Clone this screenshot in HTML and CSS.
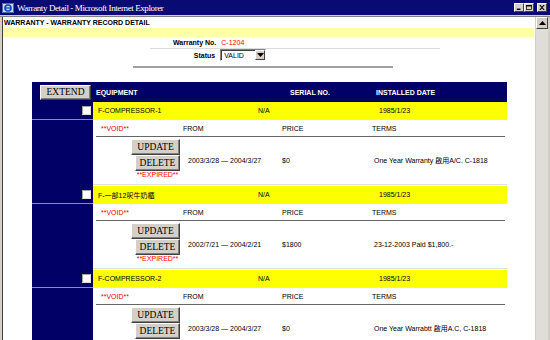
FILE: index.html
```html
<!DOCTYPE html>
<html lang="zh-Hant">
<head>
  <meta charset="UTF-8">
  <title>Warranty Detail</title>
  <link rel="stylesheet" href="styles.css">
</head>
<body>
  <div class="window">
    <div class="title-bar">
      <svg class="app-icon" viewBox="0 0 12 12" width="12" height="12">
        <rect x="0.5" y="1.5" width="11" height="9" fill="#c8d8f0" stroke="#5070a0"/>
        <circle cx="6" cy="6" r="3" fill="none" stroke="#1040c0" stroke-width="1.6"/>
        <line x1="3" y1="6" x2="9" y2="6" stroke="#1040c0" stroke-width="1.2"/>
      </svg>
      <span class="title-text">Warranty Detail - Microsoft Internet Explorer</span>
      <div class="title-buttons">
        <span class="tb-btn">
          <svg viewBox="0 0 8 7" width="8" height="7"><rect x="1" y="5" width="5" height="2" fill="#000"/></svg>
        </span>
        <span class="tb-btn">
          <svg viewBox="0 0 8 7" width="8" height="7"><rect x="0.5" y="0.5" width="7" height="6" fill="none" stroke="#000"/><rect x="0" y="0" width="8" height="2" fill="#000"/></svg>
        </span>
        <span class="tb-btn close">
          <svg viewBox="0 0 8 7" width="8" height="7"><path d="M1 0 L7 7 M7 0 L1 7" stroke="#000" stroke-width="1.6"/></svg>
        </span>
      </div>
    </div>

    <div class="client">
      <div class="page">
        <div class="page-title">WARRANTY - WARRANTY RECORD DETAIL</div>
        <div class="notice-band"></div>

        <div class="record-form">
          <div class="form-row first">
            <span class="form-label">Warranty No.</span>
            <span class="form-value red">C-1204</span>
          </div>
          <div class="form-row">
            <span class="form-label">Status</span>
            <span class="select">
              <span class="select-text">VALID</span>
              <span class="select-btn">
                <svg viewBox="0 0 7 4" width="7" height="4"><path d="M0 0 H7 L3.5 4 Z" fill="#000"/></svg>
              </span>
            </span>
          </div>
        </div>
        <div class="rule"></div>

        <div class="warranty-table">
          <div class="table-head">
            <div class="head-side"><span class="btn extend">EXTEND</span></div>
            <div class="head-cols">
              <span>EQUIPMENT</span>
              <span>SERIAL NO.</span>
              <span>INSTALLED DATE</span>
            </div>
          </div>

          <div class="record">
            <div class="rec-check"><span class="checkbox"></span></div>
            <div class="rec-main">
              <span>F-COMPRESSOR-1</span>
              <span>N/A</span>
              <span>1985/1/23</span>
            </div>
            <div class="rec-side"></div>
            <div class="rec-detail">
              <div class="detail-head">
                <span class="red">**VOID**</span>
                <span>FROM</span>
                <span>PRICE</span>
                <span>TERMS</span>
              </div>
              <div class="detail-body">
                <div class="actions">
                  <span class="btn update">UPDATE</span>
                  <span class="btn delete">DELETE</span>
                  <span class="red expired">**EXPIRED**</span>
                </div>
                <span class="cell dates">2003/3/28 — 2004/3/27</span>
                <span class="cell">$0</span>
                <span class="cell">One Year Warranty 啟用A/C. C-1818</span>
              </div>
            </div>
          </div>

          <div class="record">
            <div class="rec-check"><span class="checkbox"></span></div>
            <div class="rec-main">
              <span>F-一部12呎牛奶櫃</span>
              <span>N/A</span>
              <span>1985/1/23</span>
            </div>
            <div class="rec-side"></div>
            <div class="rec-detail">
              <div class="detail-head">
                <span class="red">**VOID**</span>
                <span>FROM</span>
                <span>PRICE</span>
                <span>TERMS</span>
              </div>
              <div class="detail-body">
                <div class="actions">
                  <span class="btn update">UPDATE</span>
                  <span class="btn delete">DELETE</span>
                  <span class="red expired">**EXPIRED**</span>
                </div>
                <span class="cell dates">2002/7/21 — 2004/2/21</span>
                <span class="cell">$1800</span>
                <span class="cell">23-12-2003 Paid $1,800.-</span>
              </div>
            </div>
          </div>

          <div class="record">
            <div class="rec-check"><span class="checkbox"></span></div>
            <div class="rec-main">
              <span>F-COMPRESSOR-2</span>
              <span>N/A</span>
              <span>1985/1/23</span>
            </div>
            <div class="rec-side"></div>
            <div class="rec-detail">
              <div class="detail-head">
                <span class="red">**VOID**</span>
                <span>FROM</span>
                <span>PRICE</span>
                <span>TERMS</span>
              </div>
              <div class="detail-body">
                <div class="actions">
                  <span class="btn update">UPDATE</span>
                  <span class="btn delete">DELETE</span>
                </div>
                <span class="cell dates">2003/3/28 — 2004/3/27</span>
                <span class="cell">$0</span>
                <span class="cell">One Year Warrabtt 啟用A.C, C-1818</span>
              </div>
            </div>
          </div>
        </div>
      </div>

      <div class="scrollbar">
        <span class="scroll-up">
          <svg viewBox="0 0 7 4" width="7" height="4"><path d="M0 4 H7 L3.5 0 Z" fill="#000"/></svg>
        </span>
      </div>
    </div>
  </div>
</body>
</html>
```

FILE: styles.css
```css
* {
  margin: 0;
  padding: 0;
  box-sizing: border-box;
}

body {
  font-family: "Liberation Sans", Arial, "Noto Sans CJK TC", sans-serif;
  font-size: 7px;
  color: #000;
  background: #d4d0c8;
  overflow: hidden;
}

.window {
  width: 550px;
  height: 340px;
  display: flex;
  flex-direction: column;
  background: #d4d0c8;
}

/* Title bar */
.title-bar {
  height: 15px;
  flex: none;
  display: flex;
  align-items: center;
  padding: 0 3px 0 2px;
  background: #0a0a74;
  color: #fff;
}

.app-icon {
  margin-right: 3px;
}

.title-text {
  flex: 1;
  font-family: "Liberation Serif", serif;
  font-size: 9px;
  letter-spacing: -0.4px;
}

.title-buttons {
  display: flex;
}

.tb-btn {
  width: 10px;
  height: 9px;
  display: flex;
  align-items: center;
  justify-content: center;
  background: #d4d0c8;
  border: 1px solid;
  border-color: #fff #404040 #404040 #fff;
}

.tb-btn svg {
  width: 6px;
  height: 5px;
}

.tb-btn.close {
  margin-left: 3px;
}

/* Client area */
.client {
  flex: 1;
  min-height: 0;
  display: flex;
  margin-top: 1px;
  padding: 0 2px;
  border-top: 1px solid #808080;
}

.page {
  flex: 1;
  background: #fff;
  border-left: 1px solid #404040;
  overflow: hidden;
}

.scrollbar {
  width: 13px;
  flex: none;
  background: #e0ddd8;
  border-left: 1px solid #d4d0c8;
}

.scroll-up {
  height: 12px;
  display: flex;
  align-items: center;
  justify-content: center;
  background: #d4d0c8;
  border: 1px solid;
  border-color: #fff #404040 #404040 #fff;
}

.page-title {
  height: 11px;
  line-height: 11px;
  padding-left: 1px;
  font-weight: bold;
}

.notice-band {
  height: 9px;
  margin-right: 1px;
  background: #ffffa6;
}

/* Record form */
.record-form {
  margin-left: 147px;
  width: 290px;
}

.form-row {
  height: 12px;
  display: flex;
  align-items: center;
  justify-content: center;
  gap: 5px;
  width: 160px;
}

.form-row.first {
  width: 100%;
  justify-content: flex-start;
  padding-left: 23px;
  border-bottom: 1px solid #dcdcdc;
}

.form-label {
  font-weight: bold;
}

.red {
  color: #f00;
}

.select {
  width: 46px;
  height: 12px;
  display: flex;
  border: 1px solid;
  border-color: #808080 #fff #fff #808080;
  box-shadow: inset 1px 1px #404040;
  background: #fff;
}

.select-text {
  flex: 1;
  padding: 1px 0 0 3px;
  line-height: 9px;
}

.select-btn {
  width: 10px;
  display: flex;
  align-items: center;
  justify-content: center;
  background: #d4d0c8;
  border: 1px solid;
  border-color: #fff #404040 #404040 #fff;
}

.rule {
  margin: 5px 0 0 130px;
  width: 260px;
  height: 2px;
  background: #a0a0a0;
}

/* Warranty table */
.warranty-table {
  margin: 14px 0 0 29px;
  width: 475px;
  background: #000066;
}

.table-head {
  height: 20px;
  display: grid;
  grid-template-columns: 61px 1fr;
}

.head-side {
  display: flex;
  align-items: center;
  padding-left: 8px;
}

.head-cols {
  display: grid;
  grid-template-columns: 194px 86px 1fr;
  align-items: center;
  padding-left: 3px;
  color: #fff;
  font-weight: bold;
}

.btn {
  height: 16px;
  display: flex;
  align-items: center;
  justify-content: center;
  font-family: "Liberation Serif", serif;
  font-size: 9.5px;
  background: #d4d0c8;
  border: 1px solid;
  border-color: #fff #404040 #404040 #fff;
  box-shadow: inset -1px -1px #808080;
}

.extend {
  width: 51px;
  height: 15px;
}

.update {
  width: 49px;
}

.delete {
  width: 45px;
}

.record {
  display: grid;
  grid-template-columns: 61px 1fr;
  grid-template-rows: 18px auto;
}

.rec-check {
  display: flex;
  align-items: center;
  justify-content: flex-end;
  padding-right: 2px;
  border-bottom: 1px solid #8a8ab6;
}

.checkbox {
  width: 9px;
  height: 9px;
  background: #fff;
  border: 1px solid;
  border-color: #a0a0a0 #e0e0e0 #e0e0e0 #a0a0a0;
}

.rec-main {
  display: grid;
  grid-template-columns: 160px 121px 1fr;
  align-items: center;
  padding-left: 5px;
  background: #ffff00;
  border-bottom: 1px solid #e8e8c0;
}

.rec-detail {
  background: #fff;
  padding-bottom: 1px;
}

.detail-head {
  height: 17px;
  margin: 0 2px 0 3px;
  padding-left: 5px;
  display: grid;
  grid-template-columns: 82px 99px 90px 1fr;
  align-items: center;
  border-bottom: 1px solid #666;
}

.detail-body {
  display: grid;
  grid-template-columns: 49px 102px 92px 1fr;
  padding: 2px 0 5px 38px;
  border-bottom: 1px solid #e0e0e0;
}

.actions {
  display: flex;
  flex-direction: column;
  align-items: flex-end;
  min-height: 40px;
}

.expired {
  align-self: center;
  height: 8px;
  line-height: 8px;
  margin-right: -4px;
}

.cell {
  padding-top: 18px;
  line-height: 8px;
}

.dates {
  padding-left: 8px;
}
```
